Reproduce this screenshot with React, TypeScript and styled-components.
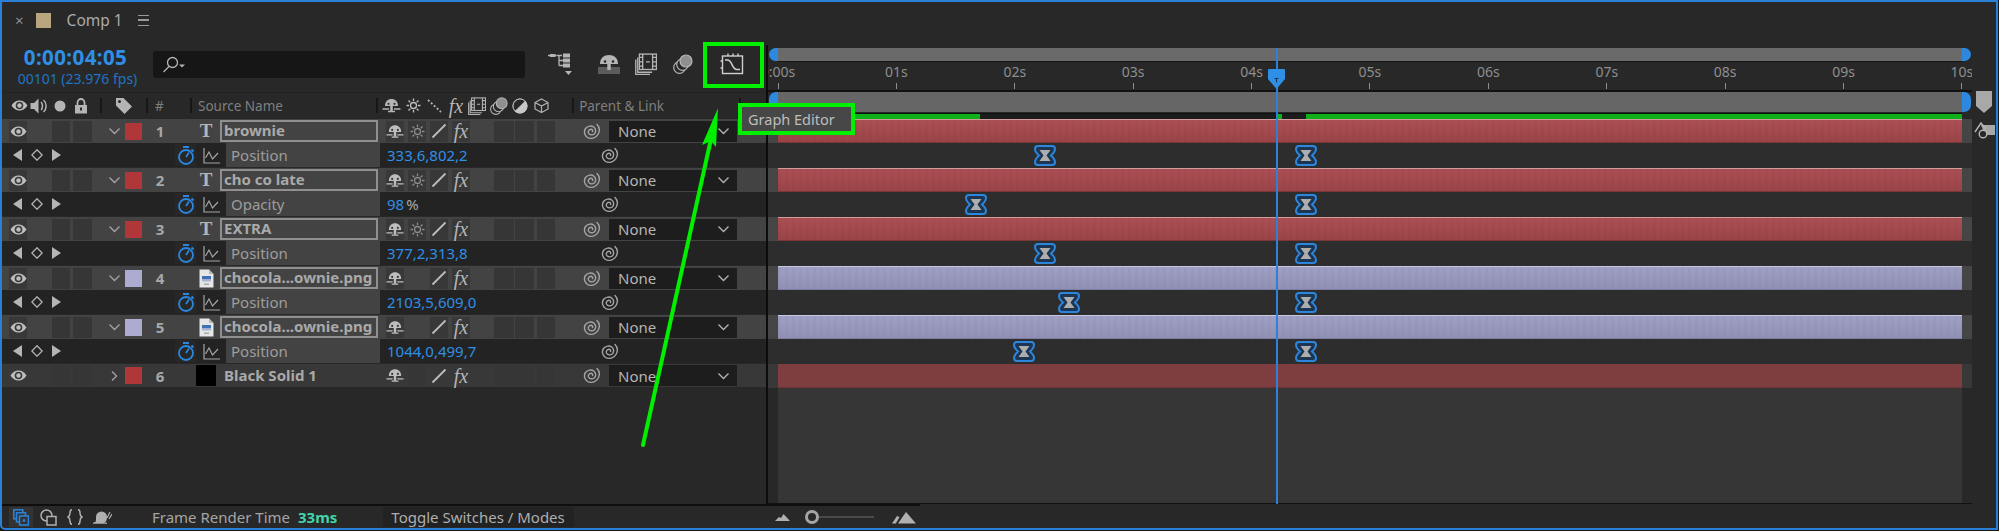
import React from "react";
import styled, { createGlobalStyle } from "styled-components";

const GlobalStyle = createGlobalStyle`
  html, body { margin: 0; padding: 0; background: #171717; }
  body { font-family: "Noto Sans", "Open Sans", sans-serif; overflow: hidden; }
`;

const BLUE = "#2f8fe6";
const GREEN = "#00f000";
const SEC = 118.4;

// Soft shading over the layer bars
const MOTTLE = `
  repeating-linear-gradient(90deg, rgba(0,0,0,0.025) 0 3px, transparent 3px 7px),
  linear-gradient(180deg, rgba(255,255,255,0.03), rgba(0,0,0,0.08))
`;

// Layout
const Frame = styled.div`
  position: relative;
  box-sizing: border-box;
  width: 1998px;
  height: 530px;
  border: 2px solid #2a7fd6;
  border-bottom-left-radius: 5px;
  background: #282828;
  display: flex;
  flex-direction: column;
  overflow: hidden;
`;

const TabBar = styled.div`
  height: 43px;
  flex: none;
  display: flex;
  align-items: center;
  padding-bottom: 7px;
  box-sizing: border-box;
  color: #a9a9a9;
`;

const CloseMark = styled.span`
  margin-left: 13px;
  font-size: 15px;
  line-height: 1;
  color: #8f8f8f;
`;

const CompSwatch = styled.span`
  width: 15px;
  height: 15px;
  margin-left: 12px;
  background: #b9a67f;
`;

const CompTitle = styled.span`
  margin-left: 16px;
  font-size: 15.5px;
  color: #aaa;
`;

const Burger = styled.span`
  width: 11px;
  height: 9px;
  margin-left: 15px;
  border-top: 1.5px solid #999;
  border-bottom: 1.5px solid #999;
  position: relative;
  &::after {
    content: "";
    position: absolute;
    left: 0;
    right: 0;
    top: 3.5px;
    height: 1.5px;
    background: #999;
  }
`;

const Main = styled.div`
  flex: 1;
  display: flex;
  min-height: 0;
`;

const LeftPanel = styled.div`
  width: 764px;
  flex: none;
  display: flex;
  flex-direction: column;
`;

const ControlRow = styled.div`
  height: 47px;
  flex: none;
  display: flex;
  align-items: flex-start;
  color: #aaa;
`;

const TimeBlock = styled.div`
  width: 151px;
  flex: none;
  text-align: center;
  margin-left: -2px;
  margin-right: 2px;
`;

const TimeCode = styled.div`
  font-size: 20.5px;
  font-weight: 700;
  line-height: 24px;
  color: ${BLUE};
  letter-spacing: 0.4px;
`;

const FrameCount = styled.div`
  font-size: 14px;
  line-height: 20px;
  padding-left: 4px;
  color: #1f74c4;
`;

const SearchBox = styled.div`
  width: 372px;
  height: 27px;
  margin-top: 6px;
  flex: none;
  border-radius: 3px;
  background: #161616;
  display: flex;
  align-items: center;
  padding-left: 9px;
  box-sizing: border-box;
`;

const ToolIcons = styled.div`
  display: flex;
  align-items: center;
  height: 32px;
  margin-top: 3px;
  margin-left: 14px;
`;

const ToolSlot = styled.span<{ $ml: number }>`
  display: flex;
  margin-left: ${(p) => p.$ml}px;
  color: #b5b5b5;
`;

const HeaderRow = styled.div`
  height: 26px;
  flex: none;
  display: flex;
  align-items: center;
  font-size: 13.5px;
  color: #7f7f7f;
  border-top: 1px solid #222;
  box-sizing: border-box;
`;

const HeaderIcon = styled.span<{ $w: number }>`
  width: ${(p) => p.$w}px;
  flex: none;
  display: flex;
  justify-content: center;
  color: #b4b4b4;
`;

const HeaderSep = styled.span<{ $ml?: number }>`
  width: 2px;
  height: 15px;
  flex: none;
  background: #161616;
  margin-left: ${(p) => p.$ml ?? 0}px;
`;

const HeaderLabel = styled.span<{ $w: number; $ml?: number }>`
  width: ${(p) => p.$w}px;
  flex: none;
  margin-left: ${(p) => p.$ml ?? 0}px;
  white-space: nowrap;
`;

const LayerRow = styled.div<{ $last?: boolean }>`
  height: ${(p) => (p.$last ? 23 : 24)}px;
  margin-top: 1px;
  flex: none;
  display: flex;
  align-items: center;
  background: ${(p) => (p.$last ? "#383838" : "#434343")};
  color: #b5b5b5;
`;

const SwitchCell = styled.span<{ $ml: number; $w?: number; $tone?: "empty" | "none" }>`
  width: ${(p) => p.$w ?? 18}px;
  height: 21px;
  flex: none;
  margin-left: ${(p) => p.$ml}px;
  display: flex;
  align-items: center;
  justify-content: center;
  background: ${(p) => (p.$tone === "none" ? "transparent" : p.$tone === "empty" ? "#363636" : "#383838")};
  color: #bdbdbd;
`;

const ChevronSlot = styled.span`
  width: 12px;
  margin-left: 16px;
  flex: none;
  display: flex;
  justify-content: center;
  color: #a5a5a5;
`;

const LabelSwatch = styled.span<{ $color: string }>`
  width: 17px;
  height: 17px;
  margin-left: 5px;
  flex: none;
  background: ${(p) => p.$color};
`;

const LayerIndex = styled.span`
  width: 36px;
  flex: none;
  text-align: center;
  font-size: 15px;
  font-weight: 700;
  color: #a8a8a8;
`;

const TypeSlot = styled.span`
  width: 20px;
  height: 21px;
  margin-left: 18px;
  flex: none;
  display: flex;
  align-items: center;
  justify-content: center;
  color: #bbb;
`;

const TypeT = styled.span`
  font-family: "Liberation Serif", serif;
  font-size: 19px;
  font-weight: 700;
  color: #b5b5b5;
`;

const SolidChip = styled.span`
  width: 20px;
  height: 21px;
  background: #000;
  border-radius: 1px;
`;

const NameBox = styled.span<{ $plain?: boolean }>`
  width: 158px;
  height: 22px;
  margin-left: 4px;
  flex: none;
  box-sizing: border-box;
  border: 2px solid ${(p) => (p.$plain ? "transparent" : "#8f8f8f")};
  padding-left: 2px;
  font-size: 15px;
  font-weight: 700;
  line-height: 17px;
  color: #a9a9a9;
  white-space: nowrap;
  overflow: hidden;
`;

const Fx = styled.span`
  font-family: "Liberation Serif", serif;
  font-style: italic;
  font-size: 20px;
  line-height: 1;
  color: #b5b5b5;
`;

const SpiralSlot = styled.span<{ $ml: number }>`
  margin-left: ${(p) => p.$ml}px;
  width: 20px;
  flex: none;
  display: flex;
  justify-content: center;
  color: #a5a5a5;
`;

const ParentSelect = styled.span`
  width: 128px;
  height: 21px;
  margin-left: 7px;
  flex: none;
  box-sizing: border-box;
  background: #1d1d1d;
  display: flex;
  align-items: center;
  justify-content: space-between;
  padding: 0 8px 0 9px;
  font-size: 15px;
  color: #b5b5b5;
`;

const PropRow = styled.div`
  height: 24px;
  flex: none;
  display: flex;
  align-items: center;
  background: #232323;
  color: #b5b5b5;
`;

const KeyNav = styled.span`
  width: 173px;
  flex: none;
  padding-left: 11px;
  box-sizing: border-box;
  display: flex;
  align-items: center;
  gap: 9px;
  color: #b5b5b5;
`;

const WatchCell = styled.span`
  width: 21px;
  height: 22px;
  flex: none;
  display: flex;
  align-items: center;
  justify-content: center;
  background: #272727;
  color: #2a86de;
`;

const GraphSlot = styled.span`
  width: 30px;
  flex: none;
  display: flex;
  justify-content: center;
  color: #a5a5a5;
`;

const PropName = styled.span`
  width: 154px;
  height: 24px;
  flex: none;
  box-sizing: border-box;
  padding-left: 5px;
  background: #434343;
  font-size: 15px;
  line-height: 24px;
  color: #9d9d9d;
`;

const PropValue = styled.span`
  width: 198px;
  margin-left: 7px;
  flex: none;
  font-size: 15px;
  color: ${BLUE};
`;

const Unit = styled.span`
  color: #a9a9a9;
  margin-left: 2px;
`;

const Timeline = styled.div`
  position: relative;
  flex: 1;
  min-width: 0;
  display: flex;
  border-left: 2px solid #0c0c0c;
`;

const TrackColumn = styled.div`
  width: 1204px;
  flex: none;
  display: flex;
  flex-direction: column;
  overflow: hidden;
  border-bottom: 1px solid #111;
  box-sizing: border-box;
`;

const NavBar = styled.div`
  height: 13px;
  margin: 3px 10px 0;
  flex: none;
  background: #6a6a6a;
  border-bottom: 1px solid #151515;
  box-sizing: content-box;
  position: relative;
`;

const Handle = styled.span<{ $side: "left" | "right" }>`
  position: absolute;
  top: 0;
  bottom: 0;
  width: 9px;
  background: #2d88e0;
  ${(p) =>
    p.$side === "left"
      ? "left: -9px; border-radius: 7px 0 0 7px;"
      : "right: -9px; border-radius: 0 7px 7px 0;"}
`;

const Ruler = styled.div`
  height: 28px;
  flex: none;
  display: flex;
  margin-left: ${10 - SEC / 2}px;
  border-bottom: 2px solid #121212;
  box-sizing: content-box;
`;

const Tick = styled.div`
  width: ${SEC}px;
  flex: none;
  display: flex;
  flex-direction: column;
  align-items: center;
  font-size: 14px;
  line-height: 20px;
  color: #8f8f8f;
  &::after {
    content: "";
    width: 1px;
    height: 6px;
    margin-top: 1px;
    background: #8f8f8f;
  }
`;

const WorkBar = styled.div`
  height: 20px;
  margin: 0 10px;
  flex: none;
  background: #666;
  position: relative;
`;

const CacheBar = styled.div`
  height: 5px;
  margin: 1px 10px 0;
  flex: none;
  background: #1c1c1c;
  display: flex;
  border-top: 1px solid #111;
`;

const CacheSeg = styled.span<{ $w: number; $on?: boolean }>`
  width: ${(p) => p.$w}px;
  flex: none;
  background: ${(p) => (p.$on ? "#0fb01a" : "transparent")};
`;

const TrackRow = styled.div<{ $layer?: boolean; $last?: boolean }>`
  position: relative;
  height: ${(p) => (p.$layer ? 24 : 25)}px;
  flex: none;
  padding: 0 10px;
  box-sizing: border-box;
  background: ${(p) => (p.$layer ? (p.$last ? "#383838" : "#454545") : "#2d2d2d")};
`;

const LayerBar = styled.div<{ $tone: "red" | "lilac" | "dim" }>`
  height: 100%;
  box-sizing: border-box;
  background-color: ${(p) => (p.$tone === "lilac" ? "#9d9dc4" : p.$tone === "dim" ? "#7e3d3f" : "#a84a4e")};
  background-image: ${(p) => (p.$tone === "dim" ? "none" : MOTTLE)};
  border-top: 1px solid
    ${(p) => (p.$tone === "lilac" ? "#c8c8e0" : p.$tone === "dim" ? "#7e3d3f" : "#d09c9c")};
  border-bottom: 1px solid
    ${(p) => (p.$tone === "lilac" ? "#7d7da6" : p.$tone === "dim" ? "#6a3234" : "#7d3638")};
`;

const KeyMark = styled.svg`
  position: absolute;
  top: 2px;
`;

const EmptyTracks = styled.div`
  flex: 1;
  margin-left: 10px;
  margin-right: 10px;
  background: #363636;
`;

const SideColumn = styled.div`
  flex: 1;
  display: flex;
  flex-direction: column;
  align-items: center;
  padding-top: 46px;
  gap: 7px;
  color: #aaa;
`;

const PlayHead = styled.div`
  position: absolute;
  left: 508px;
  top: 3px;
  bottom: 0;
  width: 1.5px;
  background: #2f80d8;
`;

const PlayHeadCap = styled.svg`
  position: absolute;
  left: -8px;
  top: 21px;
`;

const StatusBar = styled.div`
  height: 24px;
  flex: none;
  display: flex;
`;

const StatusLeft = styled.div`
  width: 918px;
  flex: none;
  display: flex;
  align-items: center;
  box-sizing: border-box;
  border-top: 2px solid #0e0e0e;
  font-size: 15px;
  color: #a5a5a5;
`;

const StatusIcon = styled.span<{ $active?: boolean; $ml: number }>`
  width: 24px;
  height: 20px;
  margin-left: ${(p) => p.$ml}px;
  flex: none;
  display: flex;
  align-items: center;
  justify-content: center;
  background: ${(p) => (p.$active ? "#333" : "transparent")};
  color: ${(p) => (p.$active ? "#2a86de" : "#b0b0b0")};
`;

const RenderLabel = styled.span`
  margin-left: 38px;
  white-space: nowrap;
`;

const RenderValue = styled.span`
  margin-left: 8px;
  font-weight: 700;
  color: #43d3a8;
`;

const ModeToggle = styled.span`
  width: 191px;
  height: 20px;
  margin-left: 46px;
  flex: none;
  box-sizing: border-box;
  padding-left: 8px;
  background: #222;
  border-radius: 2px;
  line-height: 20px;
  color: #aeaeae;
  white-space: nowrap;
`;

const ZoomGroup = styled.span`
  margin-left: 201px;
  display: flex;
  align-items: center;
  color: #b0b0b0;
`;

const ZoomTrack = styled.span`
  position: relative;
  width: 62px;
  height: 2px;
  margin: 0 18px 0 22px;
  background: #4a4a4a;
`;

const ZoomKnob = styled.span`
  position: absolute;
  left: -7px;
  top: -6px;
  width: 14px;
  height: 14px;
  box-sizing: border-box;
  border: 3px solid #a5a5a5;
  border-radius: 50%;
  background: #282828;
`;

// Annotations drawn on top of the screenshot
const HighlightBox = styled.div`
  position: absolute;
  left: 701px;
  top: 40px;
  width: 61px;
  height: 46px;
  box-sizing: border-box;
  border: 4px solid ${GREEN};
`;

const TooltipBox = styled.div`
  position: absolute;
  left: 736px;
  top: 101px;
  width: 117px;
  height: 32px;
  box-sizing: border-box;
  border: 4px solid ${GREEN};
  background: #474747;
  padding-left: 6px;
  font-size: 14.5px;
  line-height: 24px;
  color: #bdbdbd;
  white-space: nowrap;
`;

const ArrowLayer = styled.svg`
  position: absolute;
  left: 628px;
  top: 98px;
  pointer-events: none;
`;

// Icons
const EyeIcon = () => (
  <svg width="17" height="11" viewBox="0 0 17 11">
    <path d="M0.500 5.500C3 1.500 6 0.500 8.500 0.500S14 1.500 16.500 5.500C14 9.500 11 10.500 8.500 10.500S3 9.500 0.500 5.500Z" fill="#bdbdbd" />
    <circle cx="8.500" cy="5.500" r="3.800" fill="#383838" />
    <circle cx="8.500" cy="5.500" r="2.200" fill="#bdbdbd" />
  </svg>
);

const ShyIcon = () => (
  <svg width="19" height="15" viewBox="0 0 19 15" fill="currentColor">
    <path d="M3 8C3 3.500 6 1 9.500 1S16 3.500 16 8Z" />
    <rect x="8.200" y="6" width="2.600" height="7" />
    <circle cx="6.500" cy="5.800" r="1.100" fill="#333" />
    <circle cx="12.500" cy="5.800" r="1.100" fill="#333" />
    <path d="M0.500 11h6.500M12 11h6.500M6 13.500h7" stroke="currentColor" strokeWidth="1.300" />
  </svg>
);

const SunIcon = ({ color = "#8b8b8b" }: { color?: string }) => (
  <svg width="15" height="15" viewBox="0 0 15 15" fill="none" stroke={color} strokeWidth="1.300">
    <circle cx="7.500" cy="7.500" r="3" />
    <path d="M7.500 0.500v2.500M7.500 12v2.500M0.500 7.500h2.500M12 7.500h2.500M2.500 2.500l1.800 1.800M10.700 10.700l1.800 1.800M12.500 2.500l-1.800 1.800M4.300 10.700l-1.800 1.800" />
  </svg>
);

const SlashIcon = () => (
  <svg width="16" height="16" viewBox="0 0 16 16">
    <path d="M1.500 14.500L14.500 1.500" stroke="#bdbdbd" strokeWidth="1.800" />
  </svg>
);

const Chevron = ({ open = true }: { open?: boolean }) => (
  <svg width="11" height="10" viewBox="0 0 11 10" fill="none" stroke="currentColor" strokeWidth="1.300">
    {open ? <path d="M0.500 2.500l5 5 5-5" /> : <path d="M3 0.500L7.500 5 3 9.500" />}
  </svg>
);

const Spiral = () => (
  <svg width="18" height="17" viewBox="0 0 18 17" fill="none" stroke="currentColor" strokeWidth="1.400" strokeLinecap="round">
    <path d="M14 1.500C16.500 4 17 8 15 11.500C13 15 8 16.500 4.500 14.500C1.500 12.500 0.500 8.500 2.500 5.500C4.500 2.800 8.500 2.200 11 4.200C13.200 6 13.200 9.300 11.200 11C9.300 12.500 6.500 12 5.500 10C4.800 8.300 6 6.300 8 6.300C9.300 6.300 10 7.500 9.500 8.500" />
  </svg>
);

const Stopwatch = () => (
  <svg width="18" height="19" viewBox="0 0 18 19" fill="none" stroke="currentColor" strokeWidth="1.800">
    <circle cx="9" cy="11" r="7" />
    <path d="M6 1h6M9 11l3-4.500M14.500 3.500l2 2" />
  </svg>
);

const GraphMini = () => (
  <svg width="17" height="17" viewBox="0 0 17 17" fill="none" stroke="currentColor" strokeWidth="1.200">
    <path d="M1 1v15h16" />
    <path d="M2.500 11L6 5l3.500 7L15 6" />
  </svg>
);

const KeyFrameIcon = () => (
  <svg width="12" height="12" viewBox="0 0 12 12" fill="none" stroke="currentColor" strokeWidth="1.300">
    <path d="M6 0.800L11.200 6 6 11.200 0.800 6Z" />
  </svg>
);

const TriLeft = () => (
  <svg width="9" height="12" viewBox="0 0 9 12" fill="currentColor">
    <path d="M9 0v12L0 6Z" />
  </svg>
);

const TriRight = () => (
  <svg width="9" height="12" viewBox="0 0 9 12" fill="currentColor">
    <path d="M0 0v12l9-6Z" />
  </svg>
);

const FileIcon = () => (
  <svg width="15" height="19" viewBox="0 0 15 19">
    <path d="M0.500 0.500H10L14.500 5V18.500H0.500Z" fill="#e6e6e6" />
    <path d="M10 0.500V5H14.500" fill="#b5b5b5" />
    <rect x="3" y="7" width="9" height="3.500" fill="#3f6fb5" />
    <rect x="3" y="10.500" width="9" height="2" fill="#a9b6cc" />
    <rect x="5" y="14.500" width="5" height="1.500" fill="#aaa" />
  </svg>
);

const SearchIcon = () => (
  <svg width="24" height="18" viewBox="0 0 24 18" fill="none" stroke="#b5b5b5" strokeWidth="1.300">
    <circle cx="10.500" cy="6.500" r="5" />
    <path d="M7 10.500L1.500 16" />
    <path d="M17 8.500h6l-3 3Z" fill="#b5b5b5" stroke="none" />
  </svg>
);

const TreeIcon = () => (
  <svg width="25" height="24" viewBox="0 0 25 24" fill="none" stroke="currentColor" strokeWidth="1.300">
    <path d="M0 3.500h3M9 3.500h5M11 3.500v10M11 8.500h4M11 13.500h4" />
    <path d="M2 2h5l2 1.500L7 5H2Z" fill="currentColor" stroke="none" />
    <rect x="15" y="1.500" width="7" height="4" fill="currentColor" stroke="none" />
    <rect x="15" y="6.500" width="7" height="4" fill="currentColor" stroke="none" />
    <rect x="15" y="11.500" width="7" height="4" fill="currentColor" stroke="none" />
    <path d="M17 19h7l-3.500 4Z" fill="currentColor" stroke="none" />
  </svg>
);

const ShyLarge = () => (
  <svg width="22" height="20" viewBox="0 0 22 20" fill="currentColor">
    <path d="M0 13h22v7H0Z" fill="#5c5c5c" />
    <path d="M2 10C2 4 6 1 11 1S20 4 20 10Z" />
    <rect x="9.300" y="8" width="3.400" height="8" />
    <circle cx="7" cy="7.500" r="1.300" fill="#282828" />
    <circle cx="15" cy="7.500" r="1.300" fill="#282828" />
  </svg>
);

const FilmIcon = ({ size = 22 }: { size?: number }) => (
  <svg width={size} height={size} viewBox="0 0 20 20" fill="none" stroke="currentColor" strokeWidth="1.200">
    <rect x="4" y="1" width="15.500" height="14" fill="#282828" />
    <path d="M7 1v14M16 1v14M4 4h3M4 8h3M4 12h3M16 4h3.500M16 8h3.500M16 12h3.500M10 8h3.500" />
    <path d="M2.500 4v13.500h13M0.700 6v13.500h13" />
  </svg>
);

const CirclesIcon = ({ size = 20 }: { size?: number }) => (
  <svg width={size} height={size} viewBox="0 0 20 20" fill="none" stroke="currentColor" strokeWidth="1.200">
    <circle cx="6.500" cy="13.500" r="5.800" />
    <circle cx="9.500" cy="10.500" r="5.800" fill="#282828" />
    <circle cx="13" cy="7" r="6" fill="#8f8f8f" />
  </svg>
);

const GraphEditorIcon = () => (
  <svg width="24" height="22" viewBox="0 0 24 22" fill="none" stroke="#cfcfcf" strokeWidth="1.400">
    <rect x="2.500" y="3" width="20" height="17.500" />
    <path d="M0.500 8h2M0.500 15h2M8 0.500v2.500M13 0.500v2.500M18 0.500v2.500" />
    <path d="M5 7H7.500C12.500 7 11.500 16.500 17 16.500H20" strokeWidth="1.500" />
  </svg>
);

const SpeakerIcon = () => (
  <svg width="18" height="16" viewBox="0 0 18 16" fill="none" stroke="currentColor" strokeWidth="1.500">
    <path d="M0.500 5H4L8.500 0.500V15.500L4 11H0.500Z" fill="currentColor" stroke="none" />
    <path d="M11 4C13 6 13 10 11 12M13.500 2C17 5 17 11 13.500 14" />
  </svg>
);

const SoloDot = () => (
  <svg width="12" height="12" viewBox="0 0 12 12" fill="currentColor">
    <circle cx="6" cy="6" r="5.500" />
  </svg>
);

const LockIcon = () => (
  <svg width="14" height="16" viewBox="0 0 14 16" fill="none" stroke="currentColor" strokeWidth="1.800">
    <rect x="1" y="7" width="12" height="8.500" fill="currentColor" stroke="none" />
    <path d="M3.500 7V4.500a3.500 3.500 0 0 1 7 0V7" />
    <rect x="6" y="9.500" width="2" height="3" fill="#282828" stroke="none" />
  </svg>
);

const TagIcon = () => (
  <svg width="18" height="18" viewBox="0 0 18 18" fill="currentColor">
    <path d="M1 1h7.500L17 9.500 9.500 17 1 8.500ZM4.500 3A1.500 1.500 0 1 0 4.500 6 1.500 1.500 0 0 0 4.500 3Z" fillRule="evenodd" />
  </svg>
);

const MotionBlurIcon = () => (
  <svg width="15" height="14" viewBox="0 0 15 14" stroke="currentColor" strokeWidth="1.800" strokeDasharray="2 2">
    <path d="M1 1L14 13" />
  </svg>
);

const HalfCircleIcon = () => (
  <svg width="16" height="16" viewBox="0 0 16 16">
    <circle cx="8" cy="8" r="7.500" fill="#c8c8c8" />
    <path d="M13.300 2.700A7.500 7.500 0 0 0 2.700 13.300Z" fill="#282828" />
    <circle cx="8" cy="8" r="7" fill="none" stroke="#c8c8c8" />
  </svg>
);

const CubeIcon = () => (
  <svg width="15" height="15" viewBox="0 0 15 15" fill="none" stroke="currentColor" strokeWidth="1.200">
    <path d="M7.500 1L14 4.500V11L7.500 14.500 1 11V4.500ZM1 4.500L7.500 8 14 4.500M7.500 8V14.500" />
  </svg>
);

const CompStackIcon = () => (
  <svg width="16" height="17" viewBox="0 0 16 17" fill="none" stroke="currentColor" strokeWidth="1.500">
    <rect x="0.800" y="0.800" width="9" height="9" />
    <rect x="3.500" y="3.800" width="9" height="9" fill="#333" />
    <rect x="6.500" y="7" width="9" height="9" fill="#333" />
    <rect x="9.800" y="10.300" width="2.400" height="2.400" fill="currentColor" stroke="none" />
  </svg>
);

const ShapeStackIcon = () => (
  <svg width="17" height="17" viewBox="0 0 17 17" fill="none" stroke="currentColor" strokeWidth="1.500">
    <circle cx="6.500" cy="6.500" r="5.500" />
    <rect x="7" y="7.500" width="9" height="8.500" fill="#282828" />
  </svg>
);

const BracesIcon = () => (
  <svg width="16" height="16" viewBox="0 0 16 16" fill="none" stroke="currentColor" strokeWidth="1.500">
    <path d="M5 0.800C3 0.800 3 2 3 4S3 7 1 8C3 9 3 10 3 12S3 15.200 5 15.200" />
    <path d="M11 0.800C13 0.800 13 2 13 4S13 7 15 8C13 9 13 10 13 12S13 15.200 11 15.200" />
  </svg>
);

const SnailIcon = () => (
  <svg width="19" height="14" viewBox="0 0 19 14" fill="currentColor">
    <path d="M1 13C3 12 3 11 3 7A5.500 5.500 0 0 1 14 7C14 10 13 12 11 13Z" />
    <path d="M0 12.500h14v1.200H0Z" />
    <path d="M14 8L17 2M16 9L19 4" stroke="currentColor" strokeWidth="1.200" />
  </svg>
);

const MountainSmall = () => (
  <svg width="15" height="9" viewBox="0 0 15 9" fill="currentColor">
    <path d="M0 8L4 4L6 5L8.500 1L15 8Z" />
  </svg>
);

const MountainBig = () => (
  <svg width="24" height="13" viewBox="0 0 24 13" fill="currentColor">
    <path d="M0 12.500L5 5L7.500 6L3.800 12.500Z" />
    <path d="M6 12.500L14 1L24 12.500Z" />
  </svg>
);

const KeyFrame = ({ x }: { x: number }) => (
  <KeyMark width="22" height="21" viewBox="0 0 22 21" style={{ left: x - 768 - 11 }}>
    <path
      d="M4 1H18Q21 1 21 4Q21 7 17 10.500Q21 14 21 17Q21 20 18 20H4Q1 20 1 17Q1 14 5 10.500Q1 7 1 4Q1 1 4 1Z"
      fill="#1c3553"
      stroke="#2d86dc"
      strokeWidth="2"
    />
    <path d="M5.500 5H16.500L12.500 10.500L16.500 16H5.500L9.500 10.500Z" fill="#adadad" />
  </KeyMark>
);

type Layer = {
  index: number;
  name: string;
  color: string;
  kind: "text" | "file";
  prop: string;
  value: string;
  unit?: string;
  key: number;
};

const RED = "#b13639";
const LILAC = "#acacd0";

const layers: Layer[] = [
  { index: 1, name: "brownie", color: RED, kind: "text", prop: "Position", value: "333,6,802,2", key: 1045 },
  { index: 2, name: "cho co late", color: RED, kind: "text", prop: "Opacity", value: "98", unit: "%", key: 976 },
  { index: 3, name: "EXTRA", color: RED, kind: "text", prop: "Position", value: "377,2,313,8", key: 1045 },
  { index: 4, name: "chocola...ownie.png", color: LILAC, kind: "file", prop: "Position", value: "2103,5,609,0", key: 1069 },
  { index: 5, name: "chocola...ownie.png", color: LILAC, kind: "file", prop: "Position", value: "1044,0,499,7", key: 1024 },
];

const seconds = ["0:00s", "01s", "02s", "03s", "04s", "05s", "06s", "07s", "08s", "09s", "10s"];

const LeadSwitches = ({ open = true }: { open?: boolean }) => (
  <>
    <SwitchCell $ml={7}>
      <EyeIcon />
    </SwitchCell>
    <SwitchCell $ml={25} $tone="empty" />
    <SwitchCell $ml={3} $w={19} $tone="empty" />
    <ChevronSlot>
      <Chevron open={open} />
    </ChevronSlot>
  </>
);

const ModeCells = () => (
  <>
    <SwitchCell $ml={24} $w={20} $tone="empty" />
    <SwitchCell $ml={1} $w={19} $tone="empty" />
    <SwitchCell $ml={3} $w={18} $tone="empty" />
  </>
);

export default function App() {
  return (
    <>
      <GlobalStyle />
      <Frame>
        <TabBar>
          <CloseMark>×</CloseMark>
          <CompSwatch />
          <CompTitle>Comp 1</CompTitle>
          <Burger />
        </TabBar>

        <Main>
          <LeftPanel>
            <ControlRow>
              <TimeBlock>
                <TimeCode>0:00:04:05</TimeCode>
                <FrameCount>00101 (23.976 fps)</FrameCount>
              </TimeBlock>
              <SearchBox>
                <SearchIcon />
              </SearchBox>
              <ToolIcons>
                <ToolSlot $ml={9}>
                  <TreeIcon />
                </ToolSlot>
                <ToolSlot $ml={25}>
                  <ShyLarge />
                </ToolSlot>
                <ToolSlot $ml={15}>
                  <FilmIcon />
                </ToolSlot>
                <ToolSlot $ml={16}>
                  <CirclesIcon />
                </ToolSlot>
                <ToolSlot $ml={27}>
                  <GraphEditorIcon />
                </ToolSlot>
              </ToolIcons>
            </ControlRow>

            <HeaderRow>
              <HeaderIcon $w={9} />
              <HeaderIcon $w={17}>
                <EyeIcon />
              </HeaderIcon>
              <HeaderIcon $w={22}>
                <SpeakerIcon />
              </HeaderIcon>
              <HeaderIcon $w={20}>
                <SoloDot />
              </HeaderIcon>
              <HeaderIcon $w={22}>
                <LockIcon />
              </HeaderIcon>
              <HeaderSep $ml={8} />
              <HeaderIcon $w={44}>
                <TagIcon />
              </HeaderIcon>
              <HeaderSep />
              <HeaderLabel $w={35} $ml={7}>#</HeaderLabel>
              <HeaderSep />
              <HeaderLabel $w={178} $ml={6}>Source Name</HeaderLabel>
              <HeaderSep />
              <HeaderIcon $w={3} />
              <HeaderIcon $w={21.4}>
                <ShyIcon />
              </HeaderIcon>
              <HeaderIcon $w={21.4}>
                <SunIcon color="#c0c0c0" />
              </HeaderIcon>
              <HeaderIcon $w={21.4}>
                <MotionBlurIcon />
              </HeaderIcon>
              <HeaderIcon $w={21.4}>
                <Fx>fx</Fx>
              </HeaderIcon>
              <HeaderIcon $w={21.4}>
                <FilmIcon size={18} />
              </HeaderIcon>
              <HeaderIcon $w={21.4}>
                <CirclesIcon size={18} />
              </HeaderIcon>
              <HeaderIcon $w={21.4}>
                <HalfCircleIcon />
              </HeaderIcon>
              <HeaderIcon $w={21.4}>
                <CubeIcon />
              </HeaderIcon>
              <HeaderSep $ml={20} />
              <HeaderLabel $w={160} $ml={5}>Parent &amp; Link</HeaderLabel>
              <HeaderSep />
            </HeaderRow>

            {layers.map((layer) => (
              <React.Fragment key={layer.index}>
                <LayerRow>
                  <LeadSwitches />
                  <LabelSwatch $color={layer.color} />
                  <LayerIndex>{layer.index}</LayerIndex>
                  <TypeSlot>{layer.kind === "text" ? <TypeT>T</TypeT> : <FileIcon />}</TypeSlot>
                  <NameBox>{layer.name}</NameBox>
                  <SwitchCell $ml={8}>
                    <ShyIcon />
                  </SwitchCell>
                  {layer.kind === "text" ? (
                    <SwitchCell $ml={4}>
                      <SunIcon />
                    </SwitchCell>
                  ) : (
                    <SwitchCell $ml={4} $tone="none" />
                  )}
                  <SwitchCell $ml={4}>
                    <SlashIcon />
                  </SwitchCell>
                  <SwitchCell $ml={4}>
                    <Fx>fx</Fx>
                  </SwitchCell>
                  <ModeCells />
                  <SpiralSlot $ml={27}>
                    <Spiral />
                  </SpiralSlot>
                  <ParentSelect>
                    None
                    <Chevron />
                  </ParentSelect>
                </LayerRow>
                <PropRow>
                  <KeyNav>
                    <TriLeft />
                    <KeyFrameIcon />
                    <TriRight />
                  </KeyNav>
                  <WatchCell>
                    <Stopwatch />
                  </WatchCell>
                  <GraphSlot>
                    <GraphMini />
                  </GraphSlot>
                  <PropName>{layer.prop}</PropName>
                  <PropValue>
                    {layer.value}
                    {layer.unit && <Unit>{layer.unit}</Unit>}
                  </PropValue>
                  <SpiralSlot $ml={15}>
                    <Spiral />
                  </SpiralSlot>
                </PropRow>
              </React.Fragment>
            ))}

            <LayerRow $last>
              <LeadSwitches open={false} />
              <LabelSwatch $color={RED} />
              <LayerIndex>6</LayerIndex>
              <TypeSlot>
                <SolidChip />
              </TypeSlot>
              <NameBox $plain>Black Solid 1</NameBox>
              <SwitchCell $ml={8}>
                <ShyIcon />
              </SwitchCell>
              <SwitchCell $ml={4} $tone="empty" />
              <SwitchCell $ml={4}>
                <SlashIcon />
              </SwitchCell>
              <SwitchCell $ml={4}>
                <Fx>fx</Fx>
              </SwitchCell>
              <ModeCells />
              <SpiralSlot $ml={27}>
                <Spiral />
              </SpiralSlot>
              <ParentSelect>
                None
                <Chevron />
              </ParentSelect>
            </LayerRow>
          </LeftPanel>

          <Timeline>
            <TrackColumn>
              <NavBar>
                <Handle $side="left" />
                <Handle $side="right" />
              </NavBar>
              <Ruler>
                {seconds.map((s) => (
                  <Tick key={s}>{s}</Tick>
                ))}
              </Ruler>
              <WorkBar>
                <Handle $side="left" />
                <Handle $side="right" />
              </WorkBar>
              <CacheBar>
                <CacheSeg $w={202} $on />
                <CacheSeg $w={297} />
                <CacheSeg $w={5} $on />
                <CacheSeg $w={24} />
                <CacheSeg $w={656} $on />
              </CacheBar>
              {layers.map((layer) => (
                <React.Fragment key={layer.index}>
                  <TrackRow $layer>
                    <LayerBar $tone={layer.color === RED ? "red" : "lilac"} />
                  </TrackRow>
                  <TrackRow>
                    <KeyFrame x={layer.key} />
                    <KeyFrame x={1306} />
                  </TrackRow>
                </React.Fragment>
              ))}
              <TrackRow $layer $last>
                <LayerBar $tone="dim" />
              </TrackRow>
              <EmptyTracks />
            </TrackColumn>
            <SideColumn>
              <svg width="16" height="23" viewBox="0 0 16 23" fill="#a8a8a8">
                <path d="M0 0h16v15l-8 7-8-7Z" />
              </svg>
              <svg width="21" height="18" viewBox="0 0 21 18" fill="none" stroke="#b5b5b5" strokeWidth="1.400">
                <path d="M7 4h14v10H11" fill="#a8a8a8" stroke="none" />
                <path d="M1 11L7 2l5 6" />
                <circle cx="9" cy="13" r="3.800" fill="#282828" />
              </svg>
            </SideColumn>
            <PlayHead>
              <PlayHeadCap width="17" height="20" viewBox="0 0 17 20">
                <path d="M0 1a1 1 0 0 1 1-1h15a1 1 0 0 1 1 1v9L8.500 20 0 10Z" fill="#2f8fe6" />
                <path d="M6.500 9.500h4M8.500 9.500v4" stroke="#1b3550" strokeWidth="1" />
              </PlayHeadCap>
            </PlayHead>
          </Timeline>
        </Main>

        <StatusBar>
          <StatusLeft>
            <StatusIcon $active $ml={7}>
              <CompStackIcon />
            </StatusIcon>
            <StatusIcon $ml={3}>
              <ShapeStackIcon />
            </StatusIcon>
            <StatusIcon $ml={3}>
              <BracesIcon />
            </StatusIcon>
            <StatusIcon $ml={3}>
              <SnailIcon />
            </StatusIcon>
            <RenderLabel>Frame Render Time</RenderLabel>
            <RenderValue>33ms</RenderValue>
            <ModeToggle>Toggle Switches / Modes</ModeToggle>
            <ZoomGroup>
              <MountainSmall />
              <ZoomTrack>
                <ZoomKnob />
              </ZoomTrack>
              <MountainBig />
            </ZoomGroup>
          </StatusLeft>
        </StatusBar>

        <HighlightBox />
        <TooltipBox>Graph Editor</TooltipBox>
        <ArrowLayer width="100" height="352" viewBox="0 0 100 352">
          <path d="M13 345L83 30" stroke={GREEN} strokeWidth="4" strokeLinecap="round" fill="none" />
          <path d="M88 8L72 45L81 41L86 47Z" fill={GREEN} />
        </ArrowLayer>
      </Frame>
    </>
  );
}
